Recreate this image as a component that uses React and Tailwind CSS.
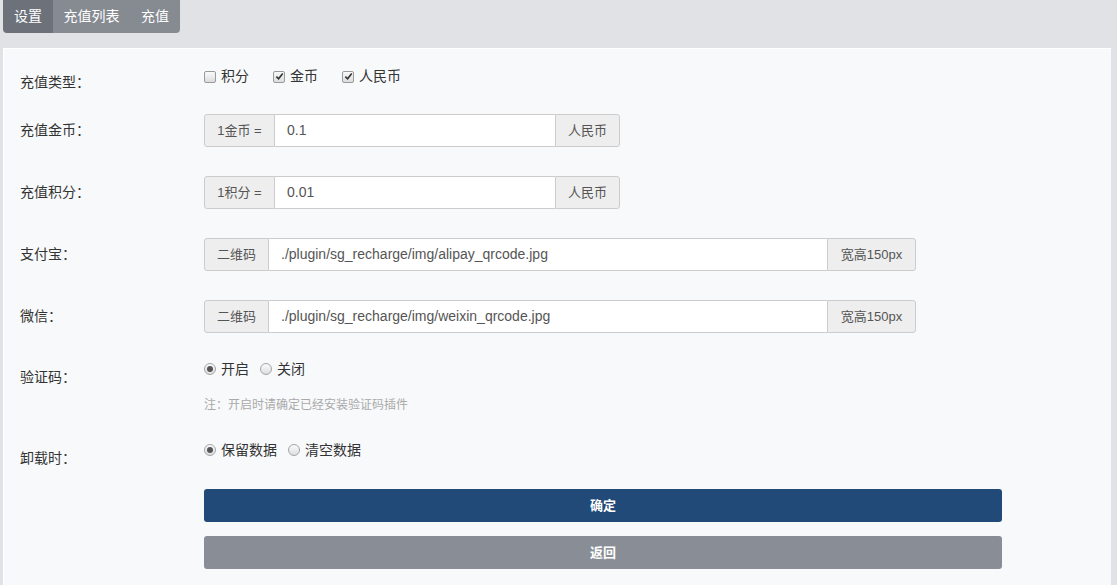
const FONT = { fontFamily: '"Liberation Sans", "Noto Sans CJK SC", sans-serif' };

function Check({ checked, label }) {
  return (
    <label className="flex items-center mr-[24px]">
      <span className="w-[12px] h-[12px] border border-[#9a9a9a] rounded-[2px] bg-gradient-to-b from-[#fafafa] to-[#dcdcdc] flex items-center justify-center">
        {checked && (
          <svg viewBox="0 0 10 10" className="w-[9px] h-[9px]">
            <path d="M1.5 5.2 L4 7.6 L8.6 1.8" fill="none" stroke="#333" strokeWidth="1.8" />
          </svg>
        )}
      </span>
      <span className="ml-[5px] text-[14px] text-[#333]">{label}</span>
    </label>
  );
}

function Radio({ checked, label }) {
  return (
    <label className="flex items-center mr-[11px]">
      <span className="w-[12px] h-[12px] rounded-full border border-[#a5a5a5] bg-gradient-to-b from-[#fbfbfb] to-[#dedede] flex items-center justify-center">
        {checked && <span className="w-[6px] h-[6px] rounded-full bg-[#555]" />}
      </span>
      <span className="ml-[5px] text-[14px] text-[#333]">{label}</span>
    </label>
  );
}

function Group({ left, value, right, leftW, inputW, rightW }) {
  return (
    <div className="flex h-[33px] text-[13px]">
      <span className={`${leftW} flex items-center justify-center bg-[#eeeeee] border border-[#cccccc] rounded-l-[3px] text-[#555]`}>{left}</span>
      <div className={`${inputW} flex items-center px-[12px] bg-white border-y border-[#cccccc] text-[14px] text-[#555]`}>{value}</div>
      <span className={`${rightW} flex items-center justify-center bg-[#eeeeee] border border-[#cccccc] rounded-r-[3px] text-[#555]`}>{right}</span>
    </div>
  );
}

function Label({ children, className = '' }) {
  return <div className={`w-[200px] pl-[16px] text-[14px] text-[#333] shrink-0 ${className}`}>{children}</div>;
}

export default function App() {
  return (
    <div className="w-[1117px] h-[585px] bg-[#e1e2e6] overflow-hidden" style={FONT}>
      <div className="pl-[3px] h-[48px]">
        <div className="flex h-[33px] rounded-b-[4px] overflow-hidden w-fit text-[14px] text-white">
          <span className="w-[50px] flex items-center justify-center bg-[#6d727a]">设置</span>
          <span className="w-[77px] flex items-center justify-center bg-[#868b92]">充值列表</span>
          <span className="w-[50px] flex items-center justify-center bg-[#868b92]">充值</span>
        </div>
      </div>
      <div className="ml-[3px] w-[1108px] h-[540px] bg-[#f8f9fb] border-t border-l border-white pt-[19px]">
        <div className="flex items-start h-[20px]">
          <Label className="pt-[4px]">充值类型：</Label>
          <div className="flex -mt-[2px]">
            <Check label="积分" />
            <Check checked label="金币" />
            <Check checked label="人民币" />
          </div>
        </div>
        <div className="flex items-center mt-[26px]">
          <Label>充值金币：</Label>
          <Group left="1金币 =" value="0.1" right="人民币" leftW="w-[71px]" inputW="w-[280px]" rightW="w-[65px]" />
        </div>
        <div className="flex items-center mt-[29px]">
          <Label>充值积分：</Label>
          <Group left="1积分 =" value="0.01" right="人民币" leftW="w-[71px]" inputW="w-[280px]" rightW="w-[65px]" />
        </div>
        <div className="flex items-center mt-[29px]">
          <Label>支付宝：</Label>
          <Group left="二维码" value="./plugin/sg_recharge/img/alipay_qrcode.jpg" right="宽高150px" leftW="w-[65px]" inputW="w-[558px]" rightW="w-[89px]" />
        </div>
        <div className="flex items-center mt-[29px]">
          <Label>微信：</Label>
          <Group left="二维码" value="./plugin/sg_recharge/img/weixin_qrcode.jpg" right="宽高150px" leftW="w-[65px]" inputW="w-[558px]" rightW="w-[89px]" />
        </div>
        <div className="flex items-start mt-[28px]">
          <Label className="pt-[6px]">验证码：</Label>
          <div>
            <div className="flex h-[20px] -mt-[2px]">
              <Radio checked label="开启" />
              <Radio label="关闭" />
            </div>
            <div className="mt-[17px] text-[12px] text-[#aaaaaa]">注：开启时请确定已经安装验证码插件</div>
          </div>
        </div>
        <div className="flex items-start mt-[28px]">
          <Label className="pt-[6px]">卸载时：</Label>
          <div className="flex h-[20px] -mt-[2px]">
            <Radio checked label="保留数据" />
            <Radio label="清空数据" />
          </div>
        </div>
        <div className="ml-[200px] w-[798px] mt-[20px]">
          <button className="w-full h-[33px] rounded-[3px] bg-[#214a78] text-white text-[13px] font-bold">确定</button>
          <button className="w-full h-[33px] mt-[14px] rounded-[3px] bg-[#898e96] text-white text-[13px] font-bold">返回</button>
        </div>
      </div>
    </div>
  );
}
